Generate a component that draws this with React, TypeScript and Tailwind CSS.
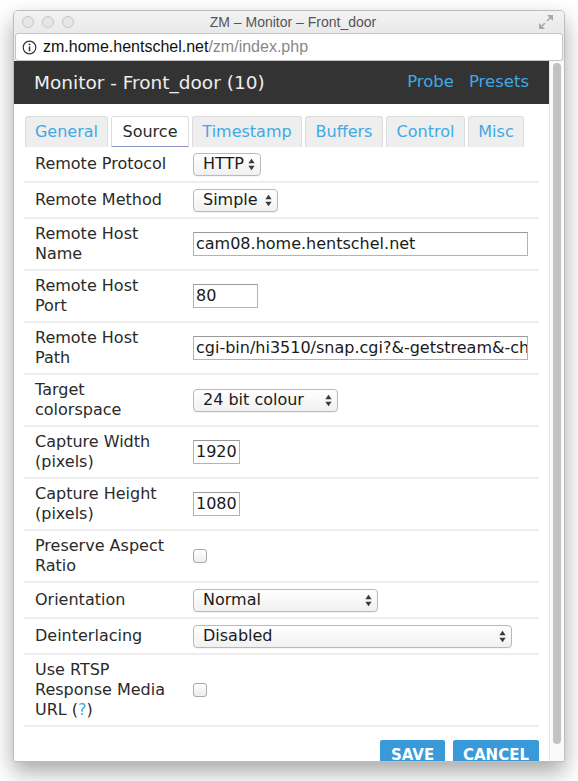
import React from "react";

const Arrows = () => (
  <svg width="7" height="13" viewBox="0 0 7 13" className="shrink-0">
    <path d="M3.5 0.8 L6.6 5.2 H0.4 Z" fill="#3a3a3a" />
    <path d="M3.5 12.2 L6.6 7.8 H0.4 Z" fill="#3a3a3a" />
  </svg>
);

function Sel({ value, cls }: { value: string; cls: string }) {
  return (
    <div
      className={
        "h-[23px] flex items-center justify-between pl-[9px] pr-[5px] border border-[#b9b9b9] rounded-[4px] bg-gradient-to-b from-white to-[#f1f1f1] text-[16px] text-[#1a1a1a] shadow-[0_1px_0_rgba(0,0,0,0.04)] " +
        cls
      }
    >
      <span className="leading-[20px] whitespace-nowrap">{value}</span>
      <Arrows />
    </div>
  );
}

function Inp({ value, cls }: { value: string; cls: string }) {
  return (
    <div
      className={
        "h-[24px] flex items-center pl-[2px] border border-[#b3b3b3] border-t-[#9a9a9a] bg-white text-[16px] text-[#1a1a1a] overflow-hidden whitespace-nowrap " +
        cls
      }
    >
      <span className="leading-[20px]">{value}</span>
    </div>
  );
}

const Check = () => (
  <div className="w-[14px] h-[14px] rounded-[3px] border border-[#a9a9a9] bg-gradient-to-b from-white to-[#ececec]" />
);

function Row({ label, children }: { label: React.ReactNode; children: React.ReactNode }) {
  return (
    <div className="flex items-center border-b-2 border-[#eeeeee] py-[5px]">
      <div className="w-[169px] shrink-0 pl-[11px] pr-[20px] leading-[20px] text-[16px] text-[#2a2a2a]">{label}</div>
      <div className="flex-1 min-h-[24px] flex items-center">{children}</div>
    </div>
  );
}

const tabs: { name: string; cls: string; active?: boolean }[] = [
  { name: "General", cls: "w-[83px]" },
  { name: "Source", cls: "w-[78px]", active: true },
  { name: "Timestamp", cls: "w-[110px]" },
  { name: "Buffers", cls: "w-[78px]" },
  { name: "Control", cls: "w-[79px]" },
  { name: "Misc", cls: "w-[56px]" },
];

export default function App() {
  return (
    <div className="w-[578px] h-[781px] bg-white pt-[10px] pl-[13px] overflow-hidden font-['DejaVu_Sans',Verdana,sans-serif]">
      <div className="w-[552px] h-[752px] flex flex-col rounded-t-[5px] rounded-b-[3px] border border-[#bdbdbd] bg-[#ececec] shadow-[0_10px_22px_rgba(0,0,0,0.35)] overflow-hidden">
        {/* title bar */}
        <div className="h-[22px] shrink-0 flex items-center px-[8px] bg-gradient-to-b from-[#f3f3f3] to-[#e9e9e9]">
          <div className="flex gap-[8px] w-[70px]">
            <div className="w-[12px] h-[12px] rounded-full border border-[#c6c6c6] bg-[#e6e6e6]" />
            <div className="w-[12px] h-[12px] rounded-full border border-[#c6c6c6] bg-[#e6e6e6]" />
            <div className="w-[12px] h-[12px] rounded-full border border-[#c6c6c6] bg-[#e6e6e6]" />
          </div>
          <div className="flex-1 text-center text-[14px] text-[#555] font-['Liberation_Sans',Arial,sans-serif] pr-[44px]">
            ZM – Monitor – Front_door
          </div>
          <svg width="16" height="16" viewBox="0 0 16 16" className="mr-[2px]">
            <path d="M15 1 L15 7 L9 1 Z" fill="#a9a9a9" />
            <path d="M12.5 3.5 L9 7" stroke="#a9a9a9" strokeWidth="1.6" />
            <path d="M1 15 L1 9 L7 15 Z" fill="#a9a9a9" />
            <path d="M3.5 12.5 L7 9" stroke="#a9a9a9" strokeWidth="1.6" />
          </svg>
        </div>
        {/* address bar */}
        <div className="h-[28px] shrink-0 mx-[1px] flex items-center border border-[#c4c4c4] rounded-[3px] bg-white font-['Liberation_Sans',Arial,sans-serif]">
          <svg width="15" height="15" viewBox="0 0 15 15" className="ml-[6px] mr-[6px]">
            <circle cx="7.5" cy="7.5" r="6.3" fill="none" stroke="#333" strokeWidth="1.2" />
            <circle cx="7.5" cy="4.4" r="0.95" fill="#333" />
            <path d="M7.5 6.4 V11.2" stroke="#333" strokeWidth="1.5" />
          </svg>
          <span className="text-[16px] text-[#111]">zm.home.hentschel.net</span>
          <span className="text-[16px] text-[#888]">/zm/index.php</span>
        </div>
        {/* content */}
        <div className="flex-1 flex bg-white overflow-hidden">
          <div className="w-[535px] shrink-0 flex flex-col">
            <div className="h-[43px] shrink-0 bg-[#333333] flex items-center justify-between pl-[20px] pr-[20px]">
              <span className="text-[18.5px] text-[#eeeeee]">Monitor - Front_door (10)</span>
              <div className="flex gap-[15px] text-[16.5px] text-[#3fa9e5]">
                <span>Probe</span>
                <span>Presets</span>
              </div>
            </div>
            <div className="px-[10px] pt-[12px]">
              <div className="flex gap-[3px] pl-[1px]">
                {tabs.map((t) => (
                  <div
                    key={t.name}
                    className={
                      "h-[31px] flex items-center justify-center rounded-t-[3px] border text-[16px] " +
                      t.cls +
                      (t.active
                        ? " bg-white border-[#dddddd] border-b-[#8e93c9] border-b-dotted text-[#2a2a2a]"
                        : " bg-[#eeeeee] border-[#dddddd] border-b-0 text-[#3fa9e5]")
                    }
                  >
                    {t.name}
                  </div>
                ))}
              </div>
              <div className="flex flex-col">
                <Row label="Remote Protocol"><Sel value="HTTP" cls="w-[68px]" /></Row>
                <Row label="Remote Method"><Sel value="Simple" cls="w-[85px]" /></Row>
                <Row label="Remote Host Name"><Inp value="cam08.home.hentschel.net" cls="w-[335px]" /></Row>
                <Row label="Remote Host Port"><Inp value="80" cls="w-[65px]" /></Row>
                <Row label="Remote Host Path"><Inp value="cgi-bin/hi3510/snap.cgi?&-getstream&-chn=1" cls="w-[335px]" /></Row>
                <Row label="Target colorspace"><Sel value="24 bit colour" cls="w-[145px]" /></Row>
                <Row label="Capture Width (pixels)"><Inp value="1920" cls="w-[47px]" /></Row>
                <Row label="Capture Height (pixels)"><Inp value="1080" cls="w-[47px]" /></Row>
                <Row label="Preserve Aspect Ratio"><Check /></Row>
                <Row label="Orientation"><Sel value="Normal" cls="w-[185px]" /></Row>
                <Row label="Deinterlacing"><Sel value="Disabled" cls="w-[319px]" /></Row>
                <Row
                  label={
                    <>
                      Use RTSP Response Media URL (<span className="text-[#3fa9e5]">?</span>)
                    </>
                  }
                >
                  <Check />
                </Row>
              </div>
              <div className="flex justify-end gap-[8px] mt-[13px]">
                <div className="w-[65px] h-[30px] bg-[#3a9ad9] rounded-t-[2px] flex items-center justify-center text-white font-bold text-[15px]">SAVE</div>
                <div className="w-[86px] h-[30px] bg-[#3a9ad9] rounded-t-[2px] flex items-center justify-center text-white font-bold text-[15px]">CANCEL</div>
              </div>
            </div>
          </div>
          <div className="flex-1 border-l border-[#e6e6e6] bg-[#fafafa] flex justify-center pt-[2px] pb-[17px]">
            <div className="w-[8px] h-full rounded-full bg-[#c2c2c2]" />
          </div>
        </div>
      </div>
    </div>
  );
}
